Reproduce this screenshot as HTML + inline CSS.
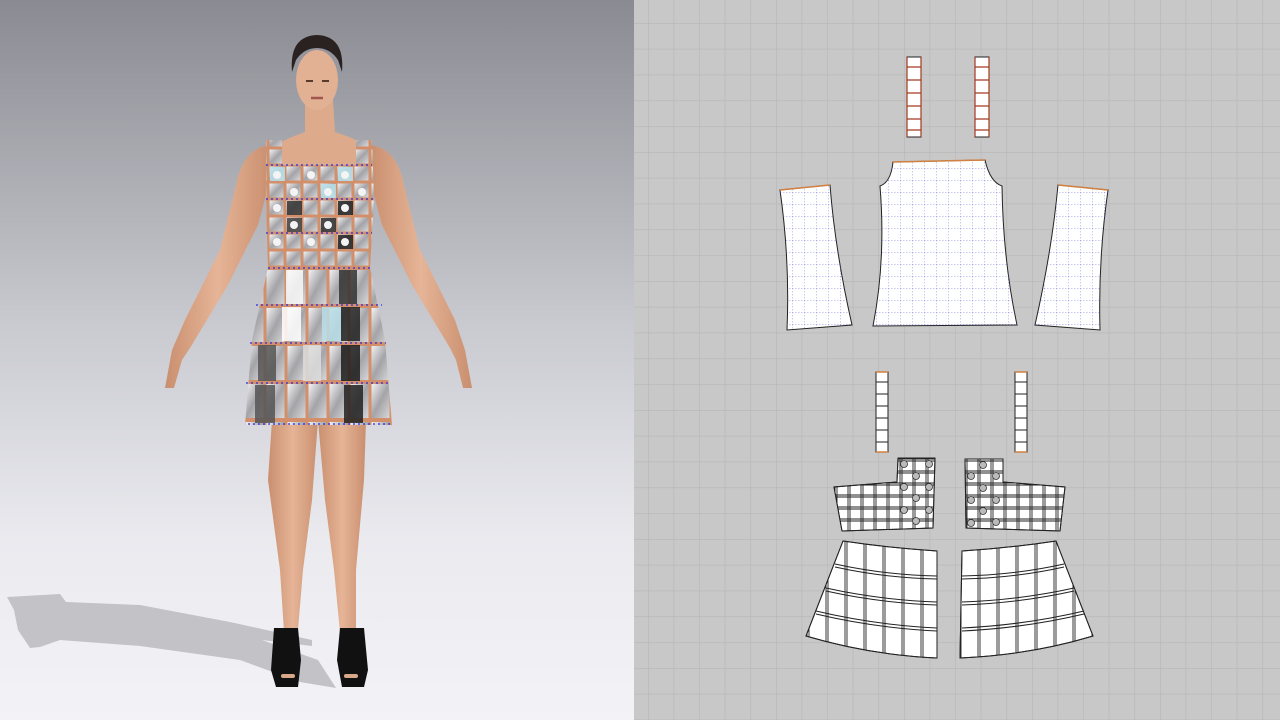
<!DOCTYPE html>
<html><head><meta charset="utf-8"><style>
html,body{margin:0;padding:0;width:1280px;height:720px;overflow:hidden;background:#c8c8c8}
svg{display:block}
</style></head><body>
<svg width="1280" height="720" viewBox="0 0 1280 720" xmlns="http://www.w3.org/2000/svg">
<defs>
<linearGradient id="bg" x1="0" y1="0" x2="0" y2="1">
<stop offset="0" stop-color="#8a8b92"/><stop offset="0.45" stop-color="#c9cad0"/><stop offset="0.75" stop-color="#eaeaef"/><stop offset="1" stop-color="#f3f3f7"/>
</linearGradient>
<linearGradient id="skin" x1="0" y1="0" x2="1" y2="0">
<stop offset="0" stop-color="#c98f6f"/><stop offset="0.5" stop-color="#e6b497"/><stop offset="1" stop-color="#c98f6f"/>
</linearGradient>
<linearGradient id="tg" x1="0" y1="0" x2="1" y2="1">
<stop offset="0" stop-color="#f2f2f4"/><stop offset="0.5" stop-color="#a4a4a8"/><stop offset="1" stop-color="#d8d8da"/>
</linearGradient>
<pattern id="grid" x="648" y="23" width="25.6" height="25.8" patternUnits="userSpaceOnUse">
<path d="M0 0V25.8M0 0H25.6" stroke="#b6b6b6" stroke-width="1.2" fill="none"/>
</pattern>
<pattern id="btile" x="268" y="165" width="17" height="17" patternUnits="userSpaceOnUse">
<rect width="17" height="17" fill="#d38f6a"/><rect x="1.5" y="1.5" width="14" height="14" fill="url(#tg)"/>
</pattern>
<pattern id="stile" x="265" y="268" width="21" height="38" patternUnits="userSpaceOnUse">
<rect width="21" height="38" fill="#d38f6a"/><rect x="1.5" y="2" width="18" height="34" fill="url(#tg)"/>
</pattern>
<pattern id="pg" x="0" y="0" width="12" height="12" patternUnits="userSpaceOnUse">
<path d="M0 0V12M0 0H12" stroke="#6b6bd8" stroke-width="0.7" stroke-dasharray="1.5 1.5" fill="none"/>
</pattern>
<pattern id="bk" x="834" y="482" width="13" height="12" patternUnits="userSpaceOnUse">
<path d="M1 0V12M3 0V12M0 1H13M0 3H13" stroke="#222" stroke-width="0.9" fill="none"/>
</pattern>
<pattern id="sk" x="806" y="541" width="19" height="23" patternUnits="userSpaceOnUse">
<path d="M1 0V23M3 0V23" stroke="#222" stroke-width="0.9" fill="none"/>
</pattern>
</defs>

<rect x="0" y="0" width="634" height="720" fill="url(#bg)"/>
<!-- shadow -->
<path d="M7 597 L60 594 L66 602 L140 605 L230 622 L312 640 L312 646 L262 640 L318 660 L336 688 L300 682 L240 660 L140 646 L60 640 L40 647 L30 648 L18 630 L14 610Z" fill="#c3c3c7"/>

<!-- arms -->
<path d="M270 145 Q243 148 236 185 L220 250 L185 320 L172 350 L165 388 L174 388 L182 360 L190 348 L228 285 L258 225 L270 180Z" fill="url(#skin)"/>
<path d="M370 145 Q397 148 404 185 L420 250 L455 320 L465 350 L472 388 L463 388 L456 360 L450 348 L412 285 L382 225 L370 180Z" fill="url(#skin)"/>
<path d="M305 100 L333 100 L335 132 Q360 140 372 150 L372 180 L268 180 L268 150 Q282 140 305 132Z" fill="#deaa8c"/>
<ellipse cx="317" cy="80" rx="21" ry="30" fill="#e2b093"/>
<path d="M292 72 Q289 36 317 35 Q345 36 342 72 L338 60 Q330 48 317 48 Q304 48 296 60Z" fill="#2a2220"/>
<path d="M306 81 h7 M322 81 h7" stroke="#5a3a30" stroke-width="2"/>
<path d="M311 98 h12" stroke="#a0564e" stroke-width="2.5"/>
<!-- legs -->
<path d="M272 420 L318 420 L312 500 L303 570 L298 630 L284 632 L280 570 L268 480Z" fill="url(#skin)"/>
<path d="M318 420 L366 420 L364 480 L356 570 L356 632 L340 632 L334 570 L325 500Z" fill="url(#skin)"/>
<!-- shoes -->
<path d="M274 628 L298 628 L301 660 L298 687 L276 687 L271 670Z" fill="#111"/>
<path d="M340 628 L364 628 L368 670 L364 687 L342 687 L337 660Z" fill="#111"/>
<path d="M283 676 h10 M346 676 h10" stroke="#d9a88a" stroke-width="4" stroke-linecap="round"/>

<!-- dress -->
<path d="M266 140 L282 140 L282 165 L356 165 L356 140 L372 140 L374 200 L370 268 L268 268 L266 200Z" fill="url(#btile)"/>
<path d="M268 268 L370 268 L385 340 L392 425 L245 425 L252 340Z" fill="url(#stile)"/>
<g opacity="0.85">
<rect x="270" y="167" width="15" height="14" fill="#b8e0ea"/><rect x="321" y="184" width="15" height="14" fill="#b8e0ea"/><rect x="338" y="167" width="15" height="14" fill="#b8e0ea"/>
<rect x="287" y="201" width="15" height="14" fill="#333"/><rect x="338" y="201" width="15" height="14" fill="#222"/>
<rect x="287" y="218" width="15" height="14" fill="#444"/><rect x="321" y="218" width="15" height="14" fill="#333"/>
<rect x="338" y="235" width="15" height="14" fill="#222"/>
<rect x="339" y="270" width="18" height="34" fill="#333"/><rect x="322" y="307" width="19" height="34" fill="#b8dfe8"/>
<rect x="341" y="307" width="19" height="34" fill="#222"/><rect x="341" y="345" width="19" height="36" fill="#1c1c1c"/>
<rect x="344" y="385" width="19" height="38" fill="#222"/><rect x="286" y="270" width="17" height="34" fill="#fafafa"/>
<rect x="282" y="307" width="19" height="34" fill="#fff"/><rect x="258" y="345" width="18" height="36" fill="#555"/>
<rect x="255" y="385" width="20" height="38" fill="#555"/><rect x="303" y="345" width="18" height="36" fill="#ddd"/>
</g>
<g fill="#f4f4f4"><circle cx="277" cy="175" r="4"/><circle cx="311" cy="175" r="4"/><circle cx="345" cy="175" r="4"/><circle cx="294" cy="192" r="4"/><circle cx="328" cy="192" r="4"/><circle cx="362" cy="192" r="4"/><circle cx="277" cy="208" r="4"/><circle cx="345" cy="208" r="4"/><circle cx="294" cy="225" r="4"/><circle cx="328" cy="225" r="4"/><circle cx="277" cy="242" r="4"/><circle cx="311" cy="242" r="4"/><circle cx="345" cy="242" r="4"/></g>
<g stroke="#2a2ae0" stroke-width="1.2" stroke-dasharray="2 3" fill="none">
<path d="M266 165H372M266 199H374M266 233H372M268 268H370M256 305H382M250 343H386M246 383H390M248 424H390"/>
</g>

<!-- right panel -->
<rect x="634" y="0" width="646" height="720" fill="#c8c8c8"/>
<rect x="634" y="0" width="646" height="720" fill="url(#grid)"/>

<g stroke="#222" stroke-width="1">
<rect x="907" y="57" width="14" height="80" fill="#fff"/><rect x="975" y="57" width="14" height="80" fill="#fff"/>
</g>
<g stroke="#a23a20" stroke-width="1.2" fill="none">
<path d="M907 57V137M921 57V137M975 57V137M989 57V137"/>
<path d="M907 67h14M907 80h14M907 93h14M907 106h14M907 119h14M907 130h14M975 67h14M975 80h14M975 93h14M975 106h14M975 119h14M975 130h14"/>
</g>
<g stroke="#222" stroke-width="1">
<path d="M780 190 L830 185 Q835 250 852 325 L787 330 Q790 260 780 190Z" fill="#fff"/>
<path d="M893 162 L985 160 Q990 182 1002 186 Q1003 260 1017 325 L873 326 Q886 260 880 186 Q891 182 893 162Z" fill="#fff"/>
<path d="M1058 185 L1108 190 Q1098 260 1100 330 L1035 325 Q1052 250 1058 185Z" fill="#fff"/>
</g>
<g fill="url(#pg)" stroke="none">
<path d="M780 190 L830 185 Q835 250 852 325 L787 330 Q790 260 780 190Z"/>
<path d="M893 162 L985 160 Q990 182 1002 186 Q1003 260 1017 325 L873 326 Q886 260 880 186 Q891 182 893 162Z"/>
<path d="M1058 185 L1108 190 Q1098 260 1100 330 L1035 325 Q1052 250 1058 185Z"/>
</g>
<path d="M780 190 L830 185 M893 162 L985 160 M1058 185 L1108 190" stroke="#d08040" stroke-width="1.5" fill="none"/>
<g stroke="#222" stroke-width="1" fill="#fff">
<rect x="876" y="372" width="12" height="80"/><rect x="1015" y="372" width="12" height="80"/>
</g>
<g stroke="#222" stroke-width="1" fill="none"><path d="M876 382h12M876 394h12M876 406h12M876 418h12M876 430h12M876 442h12M1015 382h12M1015 394h12M1015 406h12M1015 418h12M1015 430h12M1015 442h12"/></g>
<path d="M876 372h12M1015 372h12M876 452h12M1015 452h12" stroke="#d08040" stroke-width="1.5"/>
<g stroke="#222" stroke-width="1">
<path d="M898 458 L935 458 L933 528 L842 531 L834 487 L897 482Z" fill="#fff"/>
<path d="M965 459 L1003 459 L1003 482 L1065 487 L1060 531 L966 528Z" fill="#fff"/>
<path d="M898 458 L935 458 L933 528 L842 531 L834 487 L897 482Z" fill="url(#bk)"/>
<path d="M965 459 L1003 459 L1003 482 L1065 487 L1060 531 L966 528Z" fill="url(#bk)"/>
</g>
<g fill="#bbb" stroke="#333" stroke-width="0.8">
<circle cx="904" cy="464" r="3.5"/><circle cx="929" cy="464" r="3.5"/><circle cx="916" cy="476" r="3.5"/><circle cx="904" cy="487" r="3.5"/><circle cx="929" cy="487" r="3.5"/><circle cx="916" cy="498" r="3.5"/><circle cx="904" cy="510" r="3.5"/><circle cx="929" cy="510" r="3.5"/><circle cx="916" cy="521" r="3.5"/>
<circle cx="983" cy="465" r="3.5"/><circle cx="971" cy="476" r="3.5"/><circle cx="996" cy="476" r="3.5"/><circle cx="983" cy="488" r="3.5"/><circle cx="971" cy="500" r="3.5"/><circle cx="996" cy="500" r="3.5"/><circle cx="983" cy="511" r="3.5"/><circle cx="971" cy="523" r="3.5"/><circle cx="996" cy="522" r="3.5"/>
</g>
<g stroke="#222" stroke-width="1">
<path d="M843 541 Q890 548 937 551 L937 658 Q870 655 806 636Z" fill="#fff"/>
<path d="M962 551 Q1010 548 1056 541 L1093 636 Q1030 655 960 658Z" fill="#fff"/>
<path d="M843 541 Q890 548 937 551 L937 658 Q870 655 806 636Z" fill="url(#sk)"/>
<path d="M962 551 Q1010 548 1056 541 L1093 636 Q1030 655 960 658Z" fill="url(#sk)"/>
</g>
<g stroke="#222" stroke-width="1" fill="none">
<path d="M835 564 Q885 575 937 576 M835 567 Q885 578 937 579 M826 588 Q880 600 937 602 M826 591 Q880 603 937 605 M816 611 Q875 625 937 628 M816 614 Q875 628 937 631"/>
<path d="M962 576 Q1015 575 1064 564 M962 579 Q1015 578 1064 567 M962 602 Q1020 600 1074 588 M962 605 Q1020 603 1074 591 M962 628 Q1025 625 1084 611 M962 631 Q1025 628 1084 614"/>
</g>
</svg>
</body></html>
